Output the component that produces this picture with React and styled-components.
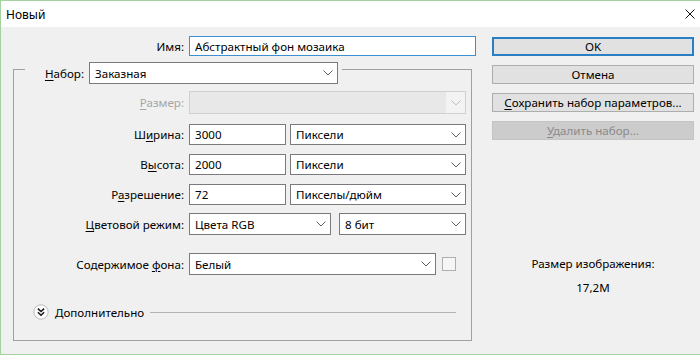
import React from "react";
import styled, { createGlobalStyle } from "styled-components";

const GlobalStyle = createGlobalStyle`
  html, body {
    margin: 0;
    padding: 0;
    background: #f0f0f0;
  }
  body {
    font-family: "Noto Sans", "DejaVu Sans", sans-serif;
    font-size: 11.6px;
    color: #000;
  }
`;

const Window = styled.div`
  width: 700px;
  height: 355px;
  box-sizing: border-box;
  border-top: 1px solid #a3d39c;
  border-left: 1px solid #a3d39c;
  border-bottom: 1px solid #a3d39c;
  background: #f0f0f0;
  display: flex;
  flex-direction: column;
`;

const TitleBar = styled.div`
  height: 26px;
  flex-shrink: 0;
  background: #fff;
  display: flex;
  align-items: center;
  justify-content: space-between;
  padding: 0 5px 0 5px;
  font-size: 12px;
`;

const Body = styled.div`
  flex: 1;
  display: flex;
  padding: 9px 0 0 12px;
`;

const LeftCol = styled.div`
  width: 459px;
  flex-shrink: 0;
  display: flex;
  flex-direction: column;
`;

const RightCol = styled.div`
  width: 202px;
  margin-left: 20px;
  display: flex;
  flex-direction: column;
`;

const Row = styled.div`
  display: flex;
  align-items: stretch;
  height: ${(p) => p.$h || 21}px;
  margin-top: ${(p) => p.$mt || 0}px;
`;

const LabelBox = styled.label`
  width: ${(p) => p.$w || 175}px;
  flex-shrink: 0;
  box-sizing: border-box;
  padding-right: 5px;
  display: flex;
  align-items: center;
  justify-content: flex-end;
  color: ${(p) => (p.$disabled ? "#a6a6a6" : "#000")};
  white-space: nowrap;
`;

const Label = ({ w, disabled, children }) => (
  <LabelBox $w={w} $disabled={disabled}>
    <span>{children}</span>
  </LabelBox>
);

const Mn = styled.span`
  text-decoration: underline;
  text-underline-offset: 2px;
`;

const TextInput = styled.input`
  width: ${(p) => p.$w}px;
  flex-shrink: 0;
  box-sizing: border-box;
  height: 100%;
  margin: 0;
  padding: 0 5px;
  border: 1px solid ${(p) => (p.$focus ? "#3c8fd0" : "#7a7a7a")};
  background: #fff;
  font: inherit;
  color: #000;
  outline: none;
`;

const Combo = styled.div`
  width: ${(p) => p.$w}px;
  flex-shrink: 0;
  margin-left: ${(p) => p.$ml || 0}px;
  box-sizing: border-box;
  height: 100%;
  display: flex;
  align-items: center;
  justify-content: space-between;
  padding-left: 5px;
  border: 1px solid ${(p) => (p.$disabled ? "#d0d0d0" : "#7a7a7a")};
  background: ${(p) => (p.$disabled ? "#e8e8e8" : "#fff")};
  white-space: nowrap;
`;

const ChevronBox = styled.span`
  width: 19px;
  height: 100%;
  display: flex;
  align-items: center;
  justify-content: center;
  background: ${(p) => (p.$disabled ? "#f3f3f3" : "transparent")};
`;

const GroupBox = styled.div`
  margin-top: 13px;
  height: 272px;
  box-sizing: border-box;
  border: 1px solid #a0a0a0;
  display: flex;
  flex-direction: column;
`;

const GroupHeader = styled.div`
  display: flex;
  align-self: flex-start;
  height: 22px;
  margin: -8px 0 0 11px;
  padding: 0 4px;
  background: #f0f0f0;
`;

const CheckBox = styled.span`
  width: 14px;
  height: 14px;
  box-sizing: border-box;
  margin: 4px 0 0 6px;
  border: 1px solid #b0b0b0;
  background: #f6f6f6;
`;

const Advanced = styled.div`
  display: flex;
  align-items: center;
  height: 16px;
  margin: 29px 15px 0 19px;
`;

const AdvancedText = styled.span`
  margin-left: 6px;
  white-space: nowrap;
`;

const Rule = styled.span`
  flex: 1;
  height: 1px;
  margin-left: 6px;
  background: #b4b4b4;
`;

const Button = styled.div`
  height: 19px;
  box-sizing: border-box;
  margin-top: ${(p) => p.$mt || 9}px;
  display: flex;
  align-items: center;
  justify-content: center;
  border: ${(p) => (p.$default ? "2px solid #2a7ec4" : "1px solid #adadad")};
  background: ${(p) => (p.$disabled ? "#cccccc" : "#e1e1e1")};
  color: ${(p) => (p.$disabled ? "#8a8a8a" : "#000")};
  ${(p) => p.$disabled && "border-color: #c4c4c4;"}
  white-space: nowrap;
`;

const Info = styled.div`
  text-align: center;
  line-height: 16px;
  margin-top: ${(p) => p.$mt}px;
`;

const Chevron = ({ disabled }) => (
  <ChevronBox $disabled={disabled}>
    <svg width="10" height="6" viewBox="0 0 10 6">
      <polyline
        points="0.5,0.5 5,5 9.5,0.5"
        fill="none"
        stroke={disabled ? "#c0c0c0" : "#606060"}
        strokeWidth="1"
      />
    </svg>
  </ChevronBox>
);

const Select = ({ w, ml, value, disabled }) => (
  <Combo $w={w} $ml={ml} $disabled={disabled}>
    <span>{value}</span>
    <Chevron disabled={disabled} />
  </Combo>
);

const CloseIcon = () => (
  <svg width="10" height="10" viewBox="0 0 10 10">
    <path d="M0.5 0.5 L9.5 9.5 M9.5 0.5 L0.5 9.5" stroke="#111" strokeWidth="1" />
  </svg>
);

const DisclosureIcon = () => (
  <svg width="16" height="16" viewBox="0 0 16 16">
    <circle cx="8" cy="8" r="7.2" fill="#fbfbfb" stroke="#bcbcbc" strokeWidth="1" />
    <path
      d="M4.9 4.6 L8 7.5 L11.1 4.6 M4.9 8.3 L8 11.2 L11.1 8.3"
      fill="none"
      stroke="#1a1a1a"
      strokeWidth="1.5"
    />
  </svg>
);

export default function App() {
  return (
    <>
      <GlobalStyle />
      <Window>
        <TitleBar>
          <span>Новый</span>
          <CloseIcon />
        </TitleBar>
        <Body>
          <LeftCol>
            <Row $h={20}>
              <Label w={176}>Имя:</Label>
              <TextInput $w={287} $focus readOnly defaultValue="Абстрактный фон мозаика" />
            </Row>
            <GroupBox>
              <GroupHeader>
                <Label w={60}>
                  <Mn>Н</Mn>абор:
                </Label>
                <Select w={249} value="Заказная" />
              </GroupHeader>
              <Row $h={23} $mt={7}>
                <Label disabled>
                  <Mn>Р</Mn>азмер:
                </Label>
                <Select w={277} value="" disabled />
              </Row>
              <Row $mt={10}>
                <Label>
                  Ш<Mn>и</Mn>рина:
                </Label>
                <TextInput $w={97} readOnly defaultValue="3000" />
                <Select w={176} ml={4} value="Пиксели" />
              </Row>
              <Row $mt={9}>
                <Label>
                  В<Mn>ы</Mn>сота:
                </Label>
                <TextInput $w={97} readOnly defaultValue="2000" />
                <Select w={176} ml={4} value="Пиксели" />
              </Row>
              <Row $mt={9}>
                <Label>
                  Р<Mn>а</Mn>зрешение:
                </Label>
                <TextInput $w={97} readOnly defaultValue="72" />
                <Select w={176} ml={4} value="Пикселы/дюйм" />
              </Row>
              <Row $h={22} $mt={8}>
                <Label>
                  <Mn>Ц</Mn>ветовой режим:
                </Label>
                <Select w={142} value="Цвета RGB" />
                <Select w={127} ml={8} value="8 бит" />
              </Row>
              <Row $h={22} $mt={18}>
                <Label>
                  Содержимое <Mn>ф</Mn>она:
                </Label>
                <Select w={247} value="Белый" />
                <CheckBox />
              </Row>
              <Advanced>
                <DisclosureIcon />
                <AdvancedText>Дополнительно</AdvancedText>
                <Rule />
              </Advanced>
            </GroupBox>
          </LeftCol>
          <RightCol>
            <Button $default $mt={1}>
              OK
            </Button>
            <Button>Отмена</Button>
            <Button>
              <span>
                <Mn>С</Mn>охранить набор параметров...
              </span>
            </Button>
            <Button $disabled>
              <span>
                <Mn>У</Mn>далить набор...
              </span>
            </Button>
            <Info $mt={116}>Размер изображения:</Info>
            <Info $mt={8}>17,2M</Info>
          </RightCol>
        </Body>
      </Window>
    </>
  );
}
